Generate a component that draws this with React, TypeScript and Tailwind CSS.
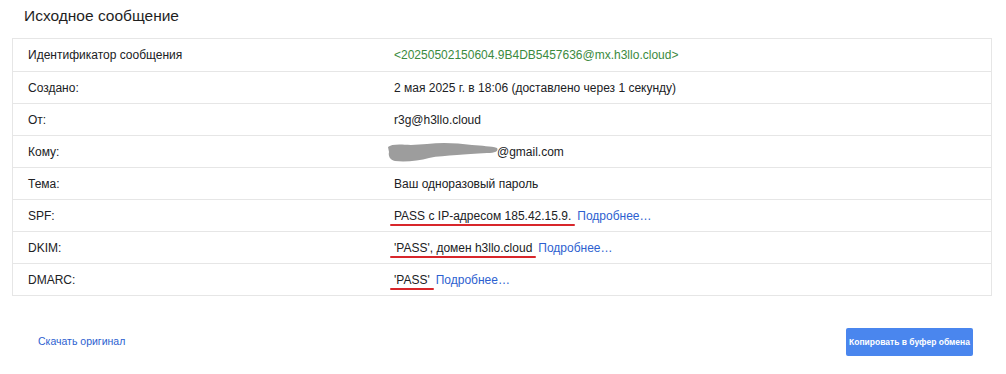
import React from 'react';

const rows: { label: string; value: React.ReactNode }[] = [];

function Mark({ children }: { children: React.ReactNode }) {
  return (
    <span className="relative inline-block">
      {children}
      <span className="absolute -left-[4px] -right-[4px] top-[17px] h-[2px] rounded-full bg-[#d8262b]" />
    </span>
  );
}

function More() {
  return <a className="ml-[6px] text-[#2d5fd0]">Подробнее…</a>;
}

function Redacted() {
  return (
    <svg width="112" height="22" viewBox="0 0 112 22" className="-mr-[2px] inline-block align-[-7px]">
      <path
        d="M1 6 C4 3 12 3 24 4 L40 3 C55 1 70 2 85 4 C95 5 104 5 110 7 C112 10 108 12 100 12 C88 13 78 13 70 14 C60 15 50 15 42 17 C32 20 18 21 8 20 C3 19 1 15 2 11 Z"
        fill="#9d9d9d"
      />
    </svg>
  );
}

rows.push(
  {
    label: 'Идентификатор сообщения',
    value: <span className="text-[#3b8a3e]">&lt;20250502150604.9B4DB5457636@mx.h3llo.cloud&gt;</span>,
  },
  { label: 'Создано:', value: '2 мая 2025 г. в 18:06 (доставлено через 1 секунду)' },
  { label: 'От:', value: 'r3g@h3llo.cloud' },
  {
    label: 'Кому:',
    value: (
      <span className="-ml-[7px]">
        <Redacted />
        @gmail.com
      </span>
    ),
  },
  { label: 'Тема:', value: 'Ваш одноразовый пароль' },
  {
    label: 'SPF:',
    value: (
      <>
        <Mark>PASS с IP-адресом 185.42.15.9.</Mark>
        <More />
      </>
    ),
  },
  {
    label: 'DKIM:',
    value: (
      <>
        <Mark>'PASS', домен h3llo.cloud</Mark>
        <More />
      </>
    ),
  },
  {
    label: 'DMARC:',
    value: (
      <>
        <Mark>'PASS'</Mark>
        <More />
      </>
    ),
  },
);

export default function App() {
  return (
    <div className="h-[374px] w-[1006px] bg-white font-['Liberation_Sans',Arial,sans-serif] text-[#202124]">
      <h1 className="pl-[24px] pt-[6px] text-[15.5px] leading-[20px] text-[#1f1f1f]">Исходное сообщение</h1>

      <div className="ml-[12px] mt-[12px] w-[980px] border border-[#e6e6e6]">
        {rows.map((r, i) => (
          <div
            key={r.label}
            className={`flex h-[32px] items-center text-[12px] ${i > 0 ? 'border-t border-[#e6e6e6]' : ''}`}
          >
            <div className="w-[381px] shrink-0 pl-[15px]">{r.label}</div>
            <div className="flex-1">{r.value}</div>
          </div>
        ))}
      </div>

      <div className="mt-[32px] flex items-center justify-between pl-[38px] pr-[33px]">
        <a className="text-[10.5px] text-[#2d5fd0]">Скачать оригинал</a>
        <button className="flex h-[28px] w-[127px] items-center justify-center whitespace-nowrap rounded-[2px] bg-[#4a86ee] text-[8.5px] font-bold text-white">
          Копировать в буфер обмена
        </button>
      </div>
    </div>
  );
}
